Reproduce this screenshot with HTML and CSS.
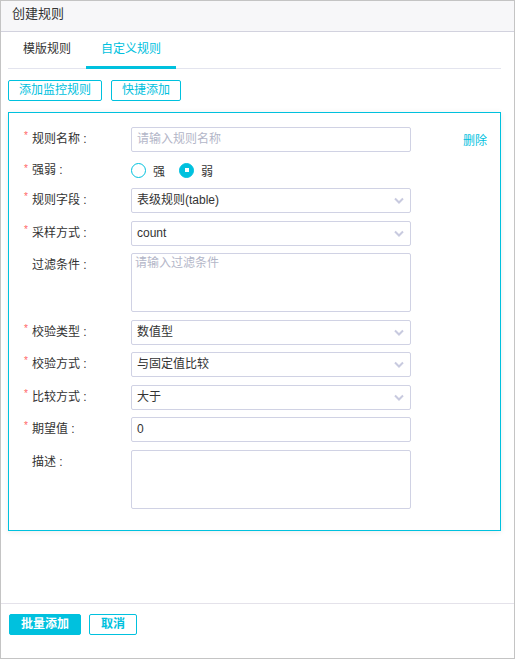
FILE: index.html
```html
<!DOCTYPE html>
<html lang="zh-CN">
<head>
    <meta charset="UTF-8">
    <meta name="viewport" content="width=device-width, initial-scale=1.0">
    <title>创建规则</title>
    <link rel="stylesheet" href="styles.css">
</head>
<body>
    <div class="dialog">
        <div class="dialog-header">创建规则</div>

        <div class="dialog-body">
            <!-- 标签页 -->
            <div class="tabs">
                <div class="tab">模版规则</div>
                <div class="tab active">自定义规则</div>
            </div>

            <div class="toolbar">
                <button class="btn">添加监控规则</button>
                <button class="btn">快捷添加</button>
            </div>

            <!-- 规则卡片 -->
            <div class="rule-card">
                <div class="form-row">
                    <label class="form-label"><span class="star">*</span>规则名称 :</label>
                    <div class="form-input placeholder">请输入规则名称</div>
                    <a class="link-delete">删除</a>
                </div>

                <div class="form-row radio-row">
                    <label class="form-label"><span class="star">*</span>强弱 :</label>
                    <span class="radio"></span><span class="radio-text">强</span>
                    <span class="radio checked"></span><span class="radio-text">弱</span>
                </div>

                <div class="form-row">
                    <label class="form-label"><span class="star">*</span>规则字段 :</label>
                    <div class="form-input form-select">
                        <span>表级规则(table)</span>
                        <svg class="arrow" width="10" height="7" viewBox="0 0 10 7"><path d="M1 1.5 L5 5.5 L9 1.5" fill="none" stroke="#c8cadf" stroke-width="2"/></svg>
                    </div>
                </div>

                <div class="form-row">
                    <label class="form-label"><span class="star">*</span>采样方式 :</label>
                    <div class="form-input form-select">
                        <span>count</span>
                        <svg class="arrow" width="10" height="7" viewBox="0 0 10 7"><path d="M1 1.5 L5 5.5 L9 1.5" fill="none" stroke="#c8cadf" stroke-width="2"/></svg>
                    </div>
                </div>

                <div class="form-row">
                    <label class="form-label"><span class="star"></span>过滤条件 :</label>
                    <div class="form-textarea placeholder">请输入过滤条件</div>
                </div>

                <div class="form-row">
                    <label class="form-label"><span class="star">*</span>校验类型 :</label>
                    <div class="form-input form-select">
                        <span>数值型</span>
                        <svg class="arrow" width="10" height="7" viewBox="0 0 10 7"><path d="M1 1.5 L5 5.5 L9 1.5" fill="none" stroke="#c8cadf" stroke-width="2"/></svg>
                    </div>
                </div>

                <div class="form-row">
                    <label class="form-label"><span class="star">*</span>校验方式 :</label>
                    <div class="form-input form-select">
                        <span>与固定值比较</span>
                        <svg class="arrow" width="10" height="7" viewBox="0 0 10 7"><path d="M1 1.5 L5 5.5 L9 1.5" fill="none" stroke="#c8cadf" stroke-width="2"/></svg>
                    </div>
                </div>

                <div class="form-row">
                    <label class="form-label"><span class="star">*</span>比较方式 :</label>
                    <div class="form-input form-select">
                        <span>大于</span>
                        <svg class="arrow" width="10" height="7" viewBox="0 0 10 7"><path d="M1 1.5 L5 5.5 L9 1.5" fill="none" stroke="#c8cadf" stroke-width="2"/></svg>
                    </div>
                </div>

                <div class="form-row">
                    <label class="form-label"><span class="star">*</span>期望值 :</label>
                    <div class="form-input">0</div>
                </div>

                <div class="form-row">
                    <label class="form-label"><span class="star"></span>描述 :</label>
                    <div class="form-textarea"></div>
                </div>
            </div>
        </div>

        <div class="dialog-footer">
            <button class="btn btn-primary">批量添加</button>
            <button class="btn btn-bold">取消</button>
        </div>
    </div>
</body>
</html>
```

FILE: styles.css
```css
* {
    box-sizing: border-box;
}

body {
    margin: 0;
    font-family: 'Liberation Sans', 'Noto Sans CJK SC', sans-serif;
    font-size: 12px;
    color: #333;
    background: #fff;
}

.dialog {
    width: 515px;
    height: 659px;
    border: 1px solid #c4c4c4;
    display: flex;
    flex-direction: column;
}

.dialog-header {
    height: 31px;
    padding: 0 11px;
    line-height: 25px;
    font-size: 13px;
    background-color: #f7f7f9;
    border-bottom: 1px solid #d2d2de;
}

.dialog-body {
    flex: 1;
    padding: 0 13px 0 7px;
}

/* 标签页 */
.tabs {
    display: flex;
    height: 37px;
    border-bottom: 1px solid #e3e4ee;
}

.tab {
    padding: 7px 15px;
    line-height: 20px;
    height: 37px;
    border-bottom: 3px solid transparent;
    color: #333;
}

.tab.active {
    color: #00c1de;
    border-bottom-color: #00c1de;
}

.toolbar {
    display: flex;
    gap: 9px;
    margin-top: 11px;
}

.btn {
    font-family: inherit;
    font-size: 12px;
    line-height: 19px;
    padding: 0 10px;
    background-color: #fff;
    color: #00c1de;
    border: 1px solid #00c1de;
    border-radius: 2px;
    cursor: pointer;
}

.btn-primary {
    background-color: #00c1de;
    color: #fff;
    font-weight: bold;
    padding: 0 11px;
}

.btn-bold {
    font-weight: bold;
    padding: 0 11px;
}

/* 规则卡片 */
.rule-card {
    margin-top: 11px;
    border: 1px solid #00c1de;
    padding: 14px 13px 21px 15px;
    box-shadow: 0 1px 6px rgba(0, 0, 0, 0.08);
}

.form-row {
    display: flex;
    align-items: flex-start;
    margin-bottom: 7.5px;
}

.form-row:last-child {
    margin-bottom: 0;
}

.form-label {
    width: 107px;
    flex-shrink: 0;
    line-height: 25px;
    display: flex;
    color: #333;
}

.star {
    width: 8px;
    color: #f66;
    font-size: 10px;
    line-height: 18px;
}

.form-input {
    width: 280px;
    height: 25px;
    line-height: 23px;
    padding: 0 5px;
    border: 1px solid #d0d2e4;
    border-radius: 2px;
    color: #333;
}

.form-select {
    display: flex;
    justify-content: space-between;
    align-items: center;
}

.arrow {
    margin-right: 1px;
}

.form-textarea {
    width: 280px;
    height: 59px;
    padding: 1px 3px;
    line-height: 17px;
    border: 1px solid #d0d2e4;
    border-radius: 2px;
}

.placeholder {
    color: #b3b6c8;
}

.link-delete {
    margin-left: auto;
    height: 25px;
    line-height: 29px;
    color: #00c1de;
    cursor: pointer;
}

.radio-row {
    height: 21px;
    align-items: center;
}

.radio-row .form-label {
    line-height: 21px;
}

.radio {
    width: 15px;
    height: 15px;
    border: 1px solid #00c1de;
    border-radius: 50%;
    display: flex;
    align-items: center;
    justify-content: center;
}

.radio.checked {
    background-color: #00c1de;
}

.radio.checked::after {
    content: '';
    width: 4px;
    height: 4px;
    background-color: #fff;
}

.radio-text {
    margin-left: 7px;
    margin-right: 14px;
}

.dialog-footer {
    height: 55px;
    padding: 10px 8px;
    border-top: 1px solid #e4e2ea;
    display: flex;
    align-items: flex-start;
    gap: 8px;
}

.dialog-footer .btn {
    height: 21px;
}
```
